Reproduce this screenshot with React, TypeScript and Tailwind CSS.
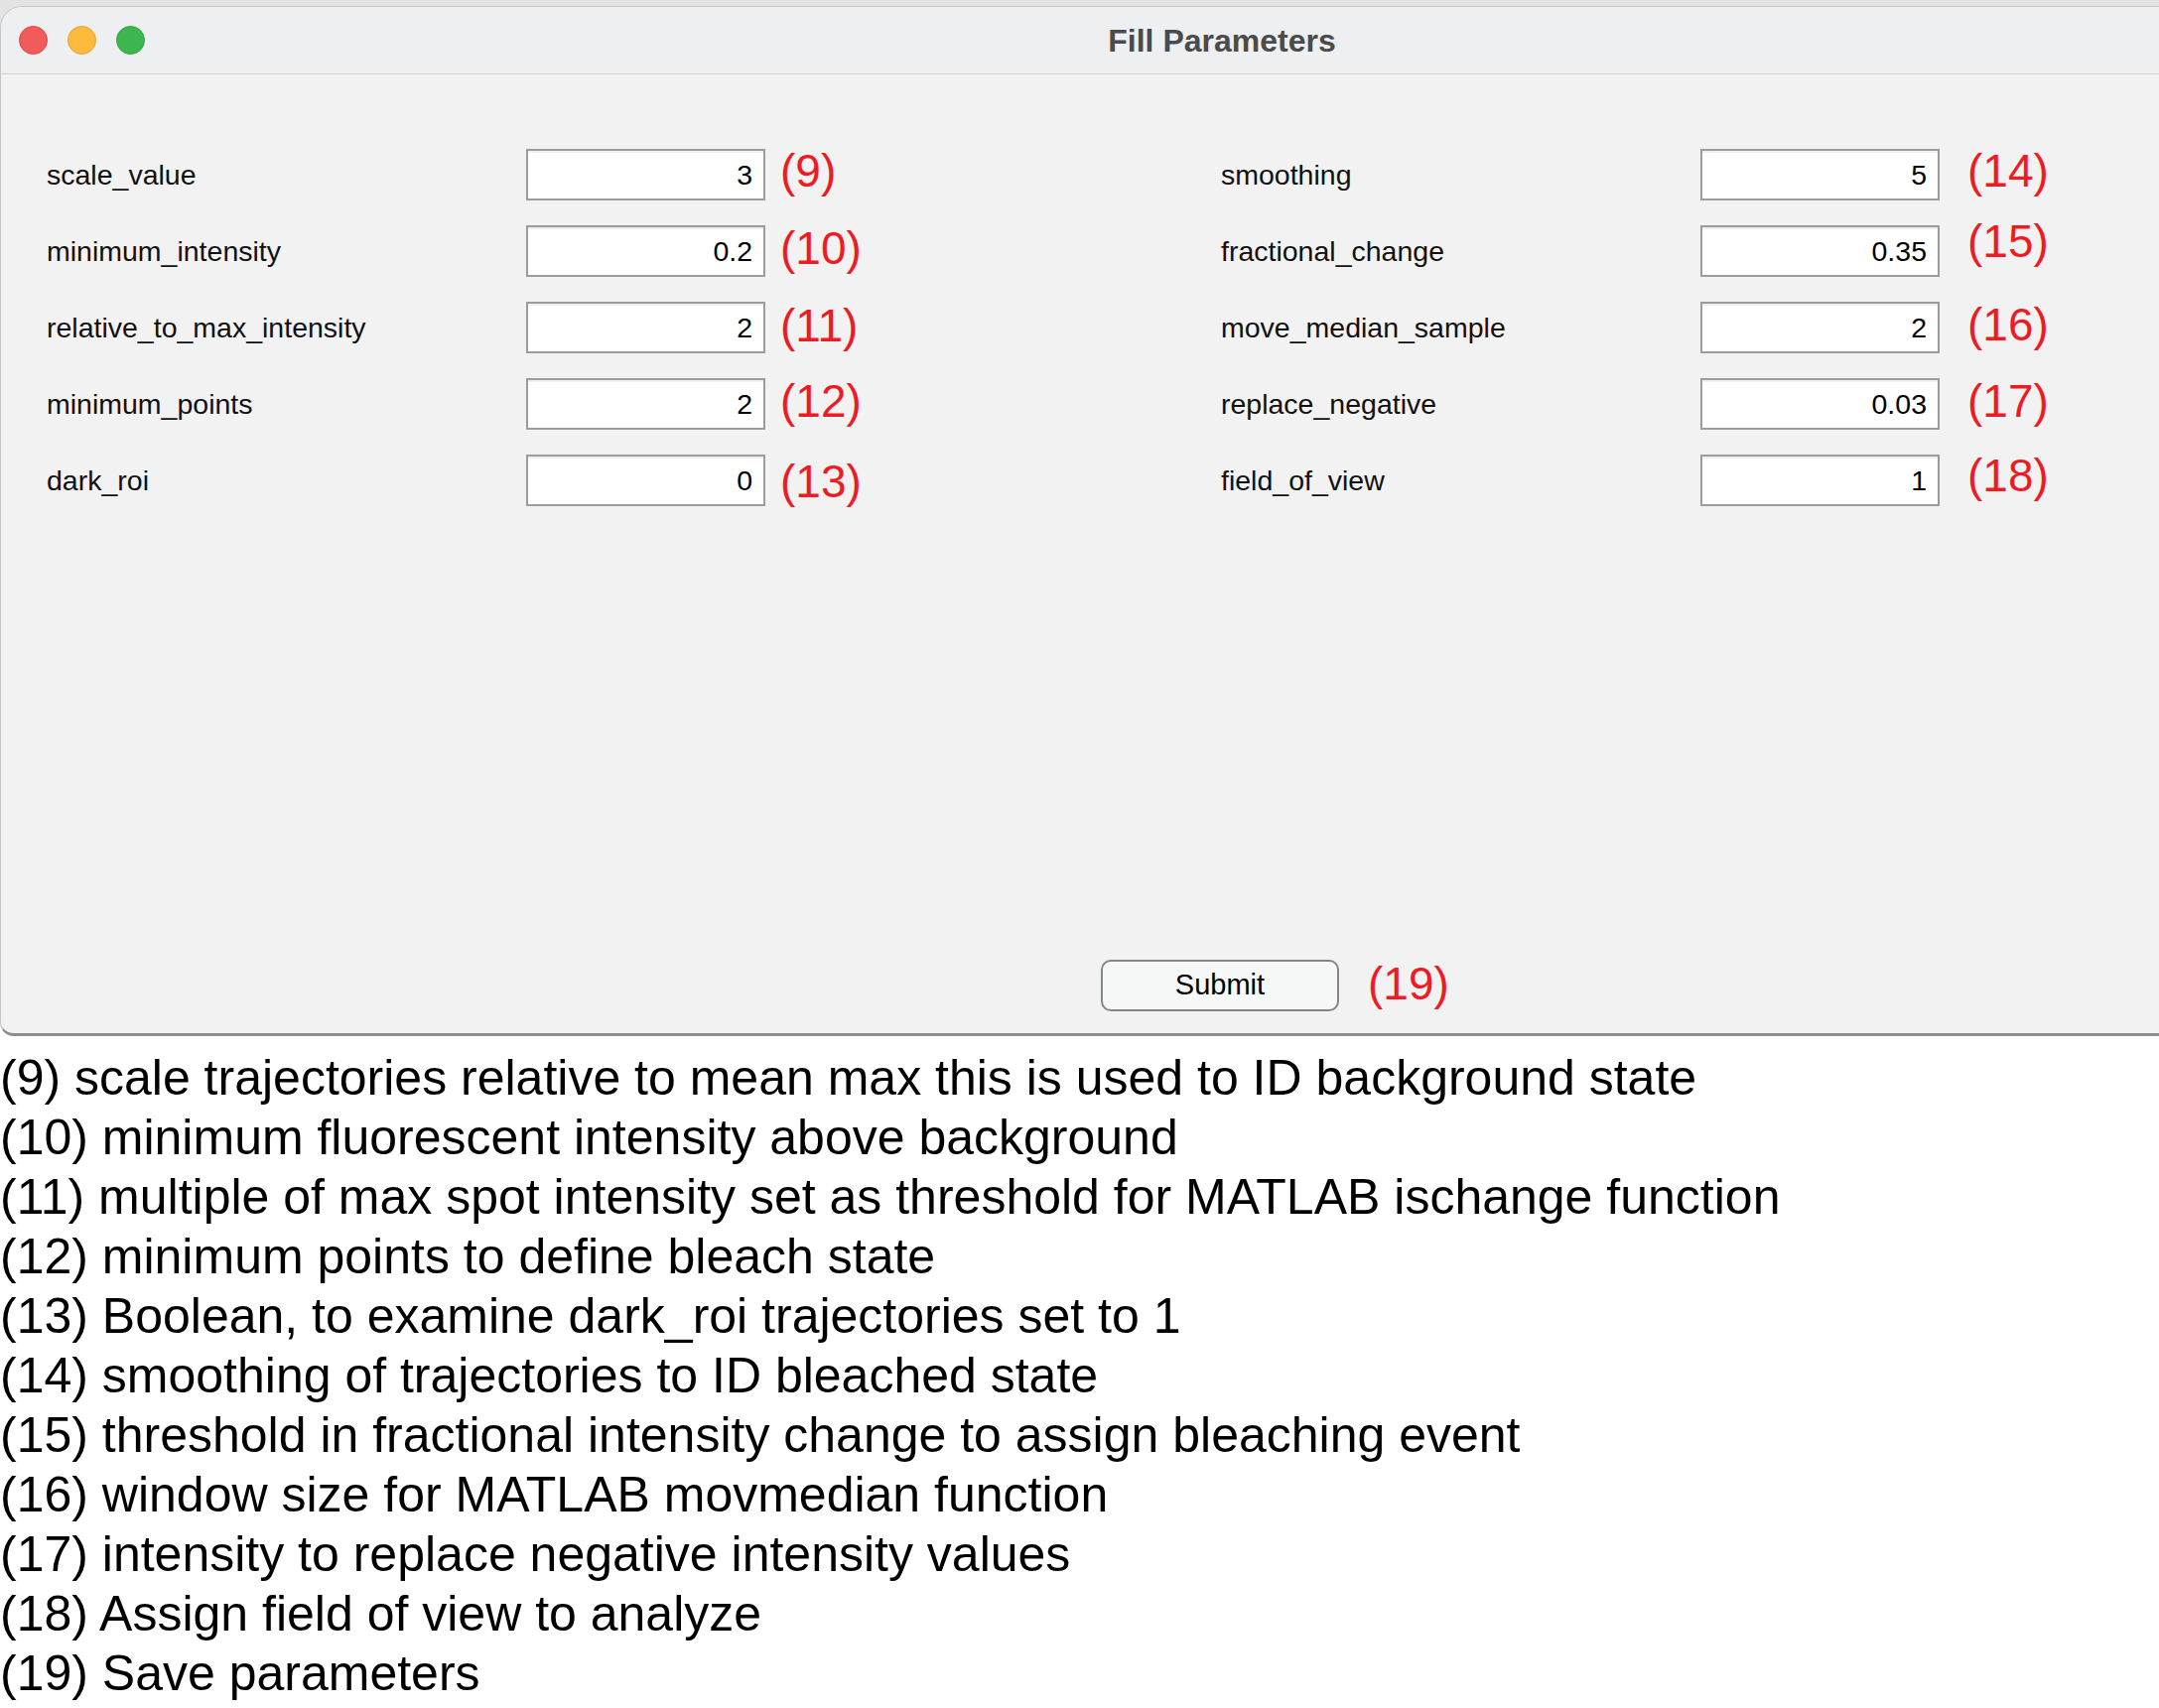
import React from 'react';

type Param = { name: string; value: string; tag: string; tagClass: string };

const leftParams: Param[] = [
  { name: 'scale_value', value: '3', tag: '(9)', tagClass: 'ml-[15px] mb-[8px]' },
  { name: 'minimum_intensity', value: '0.2', tag: '(10)', tagClass: 'ml-[15px] mb-[5px]' },
  { name: 'relative_to_max_intensity', value: '2', tag: '(11)', tagClass: 'ml-[15px] mb-[4px]' },
  { name: 'minimum_points', value: '2', tag: '(12)', tagClass: 'ml-[15px] mb-[6px]' },
  { name: 'dark_roi', value: '0', tag: '(13)', tagClass: 'ml-[15px] mt-[2px]' },
];

const rightParams: Param[] = [
  { name: 'smoothing', value: '5', tag: '(14)', tagClass: 'ml-[28px] mb-[8px]' },
  { name: 'fractional_change', value: '0.35', tag: '(15)', tagClass: 'ml-[28px] mb-[20px]' },
  { name: 'move_median_sample', value: '2', tag: '(16)', tagClass: 'ml-[28px] mb-[6px]' },
  { name: 'replace_negative', value: '0.03', tag: '(17)', tagClass: 'ml-[28px] mb-[6px]' },
  { name: 'field_of_view', value: '1', tag: '(18)', tagClass: 'ml-[28px] mb-[10px]' },
];

const notes = [
  '(9) scale trajectories relative to mean max this is used to ID background state',
  '(10) minimum fluorescent intensity above background',
  '(11) multiple of max spot intensity set as threshold for MATLAB ischange function',
  '(12) minimum points to define bleach state',
  '(13) Boolean, to examine dark_roi trajectories set to 1',
  '(14) smoothing of trajectories to ID bleached state',
  '(15) threshold in fractional intensity change to assign bleaching event',
  '(16) window size for MATLAB movmedian function',
  '(17) intensity to replace negative intensity values',
  '(18) Assign field of view to analyze',
  '(19) Save parameters',
];

function ParamRow({ p }: { p: Param }) {
  return (
    <div className="flex items-center h-[52px]">
      <div className="w-[483px] text-[28.5px] text-[#111]">{p.name}</div>
      {/* numeric field */}
      <div className="w-[241px] h-[52px] border-2 border-[#9c9c9c] bg-white shadow-[inset_0_2px_0_#eef0f3] flex items-center justify-end pr-[11px] text-[28.5px] text-black">
        {p.value}
      </div>
      <span className={`text-[46px] text-[#ed1c24] ${p.tagClass}`}>{p.tag}</span>
    </div>
  );
}

export default function App() {
  return (
    <div className="w-[2175px] h-[1721px] overflow-hidden bg-[linear-gradient(to_bottom,#e3e3e3_40px,#ffffff_40px)] font-['Liberation_Sans',Arial,sans-serif]">
      <div className="pt-[6px]">
        {/* Window */}
        <div className="w-[2462px] rounded-tl-[22px] rounded-bl-[14px] border border-[#c6c6c6] border-b-[3px] border-b-[#8c8c8c] bg-[#f2f2f2] overflow-hidden">
          {/* Title bar */}
          <div className="grid grid-cols-[1fr_auto_1fr] items-center h-[68px] bg-[#eeeff0] border-b border-[#d2d2d2]">
            <div className="flex items-center gap-[20px] pl-[18px]">
              <span className="w-[29px] h-[29px] rounded-full bg-[#f15b5b] border border-[#e0443e]" />
              <span className="w-[29px] h-[29px] rounded-full bg-[#fdbb3e] border border-[#e0a234]" />
              <span className="w-[29px] h-[29px] rounded-full bg-[#3cb74f] border border-[#2ea43e]" />
            </div>
            <div className="text-[32px] font-bold text-[#4b4b4b]">Fill Parameters</div>
            <div />
          </div>

          {/* Content */}
          <div className="h-[966px] flex flex-col pt-[75px] pb-[22px]">
            <div className="grid grid-cols-2">
              <div className="flex flex-col gap-[25px] pl-[46px]">
                {leftParams.map((p) => (
                  <ParamRow key={p.name} p={p} />
                ))}
              </div>
              <div className="flex flex-col gap-[25px] -ml-[1px]">
                {rightParams.map((p) => (
                  <ParamRow key={p.name} p={p} />
                ))}
              </div>
            </div>

            <div className="mt-auto h-[52px] grid grid-cols-[1fr_auto_1fr] items-center">
              <div />
              <button className="w-[240px] h-[52px] rounded-[10px] border-2 border-[#858585] bg-[#f6f7f7] text-[29px] text-black mr-[4px]">
                Submit
              </button>
              <span className="text-[46px] leading-none text-[#ed1c24] ml-[25px] mb-[4px]">(19)</span>
            </div>
          </div>
        </div>
      </div>

      {/* Notes below the window */}
      <div className="pt-[12px] text-[50px] leading-[60px] text-black">
        {notes.map((n) => (
          <div key={n} className="whitespace-nowrap">{n}</div>
        ))}
      </div>
    </div>
  );
}
